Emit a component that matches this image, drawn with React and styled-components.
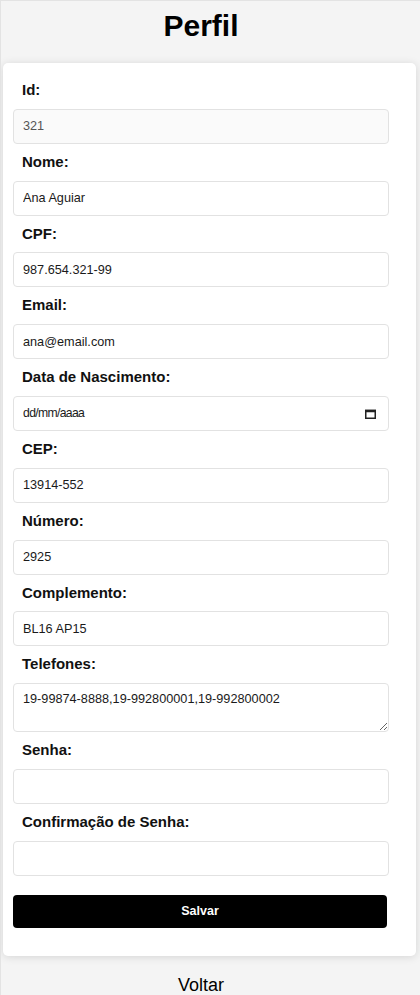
import React from "react";
import styled, { createGlobalStyle } from "styled-components";

const GlobalStyle = createGlobalStyle`
  html, body {
    margin: 0;
    padding: 0;
    background: #f4f4f4;
    font-family: "Liberation Sans", Arial, sans-serif;
    color: #000;
  }
  * { box-sizing: border-box; }
`;

const Page = styled.div`
  min-height: 100vh;
  background: #f4f4f4;
  border-top: 1px solid #e3e3e3;
  border-left: 1px solid #e3e3e3;
  overflow: hidden;
`;

const Header = styled.header`
  height: 62px;
  padding: 8px 19px 0 0;
`;

const Title = styled.h1`
  margin: 0;
  font-size: 30px;
  line-height: 34px;
  font-weight: 700;
  text-align: center;
  color: #000;
`;

const Card = styled.form`
  width: 413px;
  margin-left: 2px;
  background: #fff;
  border-radius: 5px;
  box-shadow: 0 1px 8px rgba(0, 0, 0, 0.13);
  padding: 9px 0 28px 10px;
  display: flex;
  flex-direction: column;
`;

const Field = styled.div`
  display: flex;
  flex-direction: column;
`;

const Label = styled.label`
  display: block;
  margin: 9px 0 10px 9px;
  font-size: 15px;
  line-height: 17.8px;
  font-weight: 700;
  color: #111;
`;

const inputBase = `
  width: 376px;
  border: 1px solid #e2e2e2;
  border-radius: 4px;
  font-family: "Liberation Sans", Arial, sans-serif;
  font-size: 12.7px;
  color: #1a1a1a;
  outline: none;
`;

const TextInput = styled.input`
  ${inputBase}
  height: 35px;
  padding: 0 9px;
  background: ${(p) => (p.disabled ? "#fafafa" : "#fff")};
  color: ${(p) => (p.disabled ? "#555" : "#1a1a1a")};
  font-size: ${(p) => (p.$compact ? "12.2px" : "12.7px")};
  letter-spacing: ${(p) => (p.$compact ? "-0.65px" : "normal")};
  &:disabled { -webkit-text-fill-color: #555; opacity: 1; }
`;

const DateWrap = styled.div`
  position: relative;
  width: 376px;
`;

const CalendarIcon = styled.svg`
  position: absolute;
  right: 13px;
  top: 13px;
  width: 11px;
  height: 10px;
  pointer-events: none;
`;

const TextArea = styled.textarea`
  ${inputBase}
  display: block;
  height: 49px;
  padding: 8px 9px;
  line-height: 1.15;
  resize: vertical;
  background: #fff;
`;

const SaveButton = styled.button`
  margin-top: 19px;
  width: 374px;
  height: 33px;
  border: none;
  border-radius: 4px;
  background: #000;
  color: #fff;
  font-family: "Liberation Sans", Arial, sans-serif;
  font-size: 12.5px;
  font-weight: 700;
  cursor: pointer;
`;

const BackButton = styled.button`
  display: block;
  margin: 19px 0 0 0;
  padding: 0 19px 0 0;
  width: 100%;
  border: none;
  background: transparent;
  font-family: "Liberation Sans", Arial, sans-serif;
  font-size: 18px;
  line-height: 21px;
  color: #000;
  text-align: center;
  cursor: pointer;
`;

const fields = [
  { id: "id", label: "Id:", value: "321", disabled: true },
  { id: "nome", label: "Nome:", value: "Ana Aguiar" },
  { id: "cpf", label: "CPF:", value: "987.654.321-99" },
  { id: "email", label: "Email:", value: "ana@email.com" },
  { id: "nasc", label: "Data de Nascimento:", type: "date" },
  { id: "cep", label: "CEP:", value: "13914-552" },
  { id: "numero", label: "Número:", value: "2925" },
  { id: "comp", label: "Complemento:", value: "BL16 AP15" },
  {
    id: "tel",
    label: "Telefones:",
    type: "textarea",
    value: "19-99874-8888,19-992800001,19-992800002",
  },
  { id: "senha", label: "Senha:", type: "password", value: "" },
  { id: "conf", label: "Confirmação de Senha:", type: "password", value: "" },
];

function Control({ f }) {
  if (f.type === "textarea") {
    return <TextArea id={f.id} defaultValue={f.value} />;
  }
  if (f.type === "date") {
    return (
      <DateWrap>
        <TextInput id={f.id} type="text" defaultValue="dd/mm/aaaa" readOnly $compact />
        <CalendarIcon viewBox="0 0 11 10">
          <rect x="0.75" y="1.5" width="9.5" height="7.75" fill="none" stroke="#222" strokeWidth="1.5" />
          <rect x="0" y="0.75" width="11" height="2.5" fill="#222" />
        </CalendarIcon>
      </DateWrap>
    );
  }
  return (
    <TextInput
      id={f.id}
      type={f.type || "text"}
      defaultValue={f.value}
      disabled={f.disabled}
    />
  );
}

export default function App() {
  return (
    <>
      <GlobalStyle />
      <Page>
        <Header>
          <Title>Perfil</Title>
        </Header>
        <Card onSubmit={(e) => e.preventDefault()}>
          {fields.map((f) => (
            <Field key={f.id}>
              <Label htmlFor={f.id}>{f.label}</Label>
              <Control f={f} />
            </Field>
          ))}
          <SaveButton type="submit">Salvar</SaveButton>
        </Card>
        <BackButton type="button">Voltar</BackButton>
      </Page>
    </>
  );
}
